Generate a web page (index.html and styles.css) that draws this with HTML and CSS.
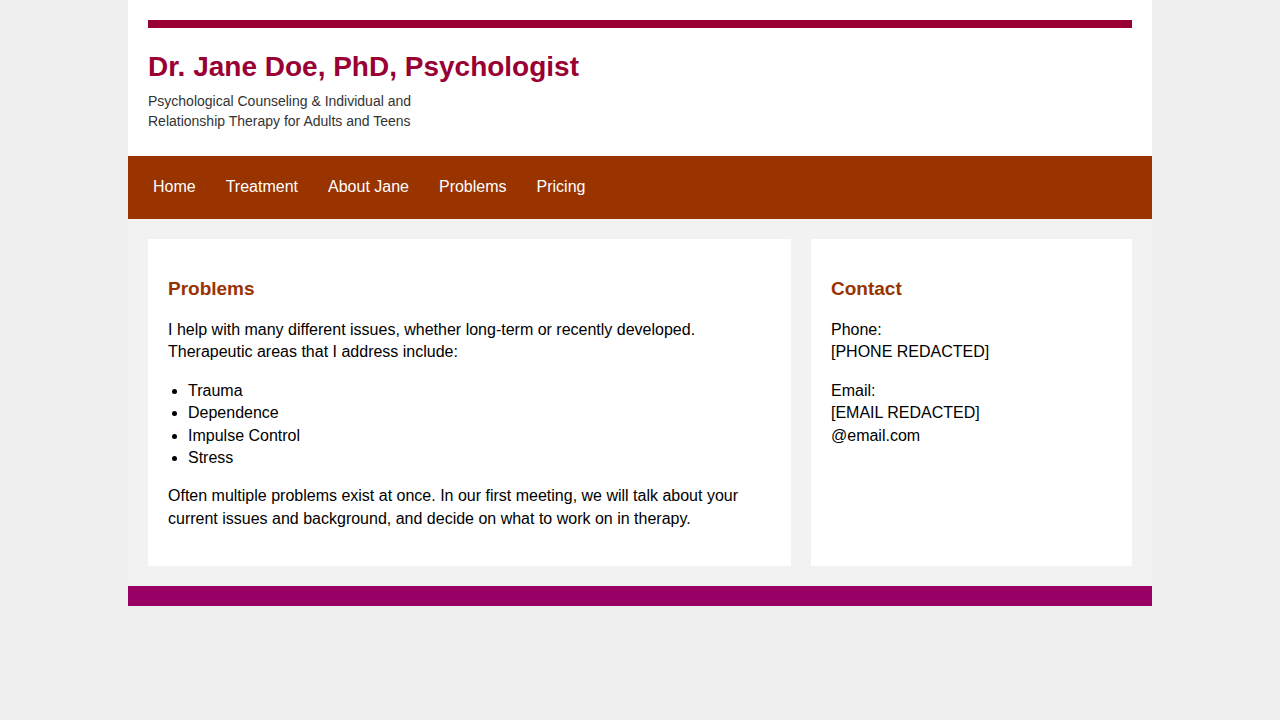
FILE: index.html
```html
<!DOCTYPE html>
<html lang="en">
<head>
<meta charset="utf-8">
<title>Dr. Jane Doe, PhD, Psychologist</title>
<link rel="stylesheet" href="styles.css">
</head>
<body>
<div class="page">
  <header class="site-header">
    <div class="topbar"></div>
    <h1 class="site-title">Dr. Jane Doe, PhD, Psychologist</h1>
    <p class="tagline">Psychological Counseling &amp; Individual and<br>Relationship Therapy for Adults and Teens</p>
  </header>
  <nav class="nav">
    <a href="#" class="nav-link">Home</a>
    <a href="#" class="nav-link">Treatment</a>
    <a href="#" class="nav-link">About Jane</a>
    <a href="#" class="nav-link">Problems</a>
    <a href="#" class="nav-link">Pricing</a>
  </nav>
  <main class="main">
    <section class="card card-main">
      <h3 class="card-title">Problems</h3>
      <p>I help with many different issues, whether long-term or recently developed. Therapeutic areas that I address include:</p>
      <ul class="list">
        <li>Trauma</li>
        <li>Dependence</li>
        <li>Impulse Control</li>
        <li>Stress</li>
      </ul>
      <p>Often multiple problems exist at once. In our first meeting, we will talk about your current issues and background, and decide on what to work on in therapy.</p>
    </section>
    <aside class="card card-side">
      <h3 class="card-title">Contact</h3>
      <p>Phone:<br>[PHONE REDACTED]</p>
      <p>Email:<br>[EMAIL REDACTED]<br>@email.com</p>
    </aside>
  </main>
  <footer class="footer"></footer>
</div>
</body>
</html>
```
FILE: styles.css
```css
html, body {
  margin: 0;
  padding: 0;
}
body {
  background: #efefef;
  font-family: "Liberation Sans", Arial, sans-serif;
  color: #000;
}
.page {
  width: 1024px;
  margin: 0 auto;
}
.site-header {
  background: #fff;
  padding: 20px 20px 25px;
}
.topbar {
  height: 8px;
  background: #990033;
}
.site-title {
  margin: 23px 0 8px;
  font-size: 28px;
  line-height: 32px;
  font-weight: bold;
  color: #990033;
}
.tagline {
  margin: 0;
  font-size: 14px;
  line-height: 20px;
  color: #333;
}
.nav {
  display: flex;
  background: #993300;
  padding: 0 10px;
}
.nav-link {
  display: block;
  padding: 19px 15px 21px;
  line-height: 23px;
  font-size: 16px;
  color: #fff;
  text-decoration: none;
}
.main {
  display: grid;
  grid-template-columns: 643px 321px;
  gap: 20px;
  padding: 20px;
  background: #f2f2f2;
}
.card {
  background: #fff;
  padding: 20px;
  font-size: 16px;
  line-height: 22.4px;
  overflow: hidden;
}
.card p {
  margin: 16px 0;
}
.card-title {
  margin: 19px 0 19px;
  font-size: 19px;
  line-height: 22px;
  font-weight: bold;
  color: #993300;
}
.list {
  margin: 16px 0;
  padding-left: 20px;
}
.footer {
  height: 20px;
  background: #990066;
}
```
